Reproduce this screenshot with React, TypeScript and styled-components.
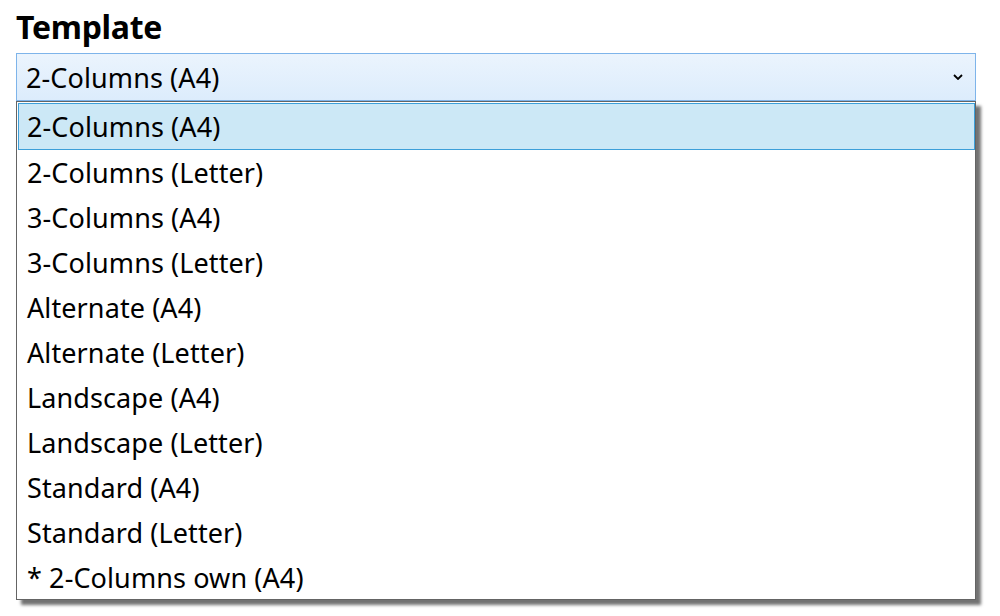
import styled, { createGlobalStyle } from "styled-components";

const templates = [
    "2-Columns (A4)",
    "2-Columns (Letter)",
    "3-Columns (A4)",
    "3-Columns (Letter)",
    "Alternate (A4)",
    "Alternate (Letter)",
    "Landscape (A4)",
    "Landscape (Letter)",
    "Standard (A4)",
    "Standard (Letter)",
    "* 2-Columns own (A4)",
];

const GlobalStyle = createGlobalStyle`
    body {
        margin: 0;
        background: #fff;
        font-family: "Noto Sans", "Open Sans", sans-serif;
        color: #000;
    }
`;

export default function App() {
    const selected = 0;
    return (
        <>
            <GlobalStyle />
            <Page>
                <Title>Template</Title>
                <Combo>
                    <ComboText>{templates[selected]}</ComboText>
                    <Chevron viewBox="0 0 10 6" width="10" height="6">
                        <path d="M1 1 L5 5 L9 1" fill="none" stroke="#000" strokeWidth="1.8" />
                    </Chevron>
                </Combo>
                <List>
                    {templates.map((t, i) => (
                        <Item key={t} $active={i === selected}>{t}</Item>
                    ))}
                </List>
            </Page>
        </>
    );
}

const Page = styled.div`
    width: 960px;
    padding: 5px 0 16px 16px;
`;

const Title = styled.h1`
    margin: 0 0 4px;
    font-size: 32px;
    font-weight: 700;
    line-height: 44px;
    letter-spacing: -0.3px;
`;

const Combo = styled.div`
    box-sizing: border-box;
    height: 48px;
    display: flex;
    align-items: center;
    justify-content: space-between;
    padding: 0 12px 0 9px;
    border: 1px solid #7eb4ea;
    background: linear-gradient(#ebf4fd, #dcecfc);
`;

const ComboText = styled.span`
    font-size: 27px;
    letter-spacing: 0.1px;
`;

const Chevron = styled.svg`
    display: block;
`;

const List = styled.div`
    box-sizing: border-box;
    height: 499px;
    border: 1px solid #646464;
    background: #fff;
    box-shadow: 5px 5px 3px rgba(0, 0, 0, 0.55);
    padding: 0 0 0 1px;
`;

const Item = styled.div<{ $active: boolean }>`
    box-sizing: border-box;
    height: ${p => (p.$active ? "47px" : "45px")};
    display: flex;
    align-items: center;
    padding-left: ${p => (p.$active ? "8px" : "9px")};
    font-size: 27px;
    letter-spacing: 0.1px;
    background: ${p => (p.$active ? "#cce8f6" : "transparent")};
    border: ${p => (p.$active ? "1px solid #3c9fd9" : "none")};
    margin-top: ${p => (p.$active ? "1px" : "0")};
`;
